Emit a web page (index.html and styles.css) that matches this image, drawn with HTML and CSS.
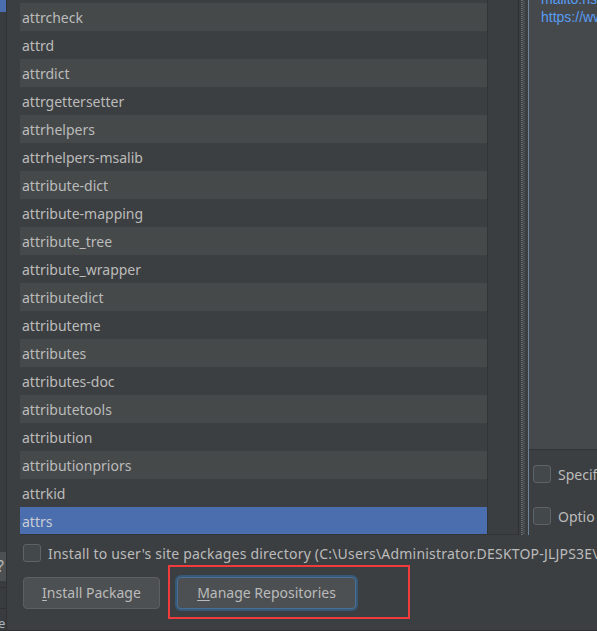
FILE: index.html
```html
<!DOCTYPE html>
<html>
<head>
<meta charset="utf-8">
<link rel="stylesheet" href="styles.css">
</head>
<body>
<div class="app">
  <div class="backdrop">
    <div class="bd-sel"></div>
    <div class="bd-fill"></div>
    <div class="bd-help">?</div>
    <div class="bd-gap1"></div>
    <div class="bd-gap2"></div>
    <div class="bd-text">e</div>
  </div>
  <div class="dialog">
    <div class="main">
      <div class="list">
        <div class="row dark partial"></div>
        <div class="row light">attrcheck</div>
        <div class="row dark">attrd</div>
        <div class="row light">attrdict</div>
        <div class="row dark">attrgettersetter</div>
        <div class="row light">attrhelpers</div>
        <div class="row dark">attrhelpers-msalib</div>
        <div class="row light">attribute-dict</div>
        <div class="row dark">attribute-mapping</div>
        <div class="row light">attribute_tree</div>
        <div class="row dark">attribute_wrapper</div>
        <div class="row light">attributedict</div>
        <div class="row dark">attributeme</div>
        <div class="row light">attributes</div>
        <div class="row dark">attributes-doc</div>
        <div class="row light">attributetools</div>
        <div class="row dark">attribution</div>
        <div class="row light">attributionpriors</div>
        <div class="row dark">attrkid</div>
        <div class="row selected">attrs</div>
      </div>
      <div class="gutter"></div>
      <div class="splitter"><span class="dots"></span></div>
      <div class="side">
        <div class="desc">
          <div class="desc-text">
            <div class="link">mailto:ns</div>
            <div class="link">https://ww</div>
          </div>
        </div>
        <div class="opts">
          <div class="opt"><span class="check"></span><span class="label">Specif</span></div>
          <div class="opt"><span class="check"></span><span class="label">Optio</span></div>
        </div>
      </div>
    </div>
    <div class="footer">
      <div class="opt user-opt"><span class="check"></span><span class="label wide">Install to user's site packages directory (C:\Users\Administrator.DESKTOP-JLJPS3E\</span></div>
      <div class="buttons">
        <div class="btn install"><u>I</u>nstall Package</div>
        <div class="btn manage focused"><u>M</u>anage Repositories</div>
      </div>
      <div class="highlight"></div>
    </div>
  </div>
</div>
</body>
</html>
```

FILE: styles.css
```css
html, body {
  margin: 0;
  padding: 0;
  background: #3c3f41;
  overflow: hidden;
}

body {
  width: 597px;
  height: 631px;
  font-family: "Noto Sans", "Open Sans", sans-serif;
  font-size: 14px;
  color: #bbbbbb;
}

.app {
  display: flex;
  height: 630px;
  border-bottom: 1px solid #2f3133;
}

.backdrop {
  flex: none;
  width: 6px;
  display: flex;
  flex-direction: column;
  background: #393c3e;
  overflow: hidden;
}

.bd-sel {
  height: 12px;
  background: #4b6eaf;
}

.bd-fill {
  flex: 1;
}

.bd-help {
  height: 29px;
  background: #4c5052;
  color: #bbbbbb;
  font-size: 16px;
  line-height: 29px;
  text-indent: -3px;
  margin-bottom: 6px;
}

.bd-gap1 {
  height: 20px;
  border-top: 1px solid #2f3133;
}

.bd-gap2 {
  height: 8px;
  border-top: 1px solid #2f3133;
}

.bd-text {
  height: 13px;
  line-height: 12px;
  font-size: 13px;
  color: #a9b7c6;
  text-indent: -2px;
}

.dialog {
  flex: 1;
  min-width: 0;
  display: flex;
  flex-direction: column;
  border-left: 1px solid #2f3133;
  position: relative;
  overflow: hidden;
}

.main {
  display: flex;
  height: 535px;
  padding-left: 13px;
}

.list {
  flex: none;
  width: 467px;
  height: 534px;
  overflow: hidden;
  border-right: 1px solid #323435;
  border-bottom: 1px solid #323435;
}

.row {
  height: 28px;
  line-height: 28px;
  padding-left: 2px;
  padding-top: 1px;
  box-sizing: border-box;
  white-space: nowrap;
}

.row.partial {
  height: 3px;
  padding: 0;
}

.row.light {
  background: #45494a;
}

.row.dark {
  background: #3c3f41;
}

.row.selected {
  background: #4b6eaf;
  color: #c8cdd4;
}

.gutter {
  flex: none;
  width: 30px;
  height: 534px;
  background: #3b3e40;
  border-right: 1px solid #2d2f30;
  border-bottom: 1px solid #323435;
}

.splitter {
  flex: none;
  width: 7px;
  height: 535px;
  border-right: 1px solid #71849a;
  display: flex;
  padding-left: 2px;
}

.dots {
  width: 4px;
  height: 535px;
  background-image:
    repeating-linear-gradient(to bottom, #67696b 0 1px, transparent 1px 2px),
    repeating-linear-gradient(to bottom, transparent 0 1px, #55585a 1px 2px);
  background-size: 2px 100%, 2px 100%;
  background-position: 0 0, 2px 0;
  background-repeat: repeat-y;
}

.side {
  flex: none;
  width: 68px;
  display: flex;
  flex-direction: column;
  overflow: hidden;
}

.desc {
  height: 449px;
  background: #46494b;
  border-bottom: 1px solid #323435;
  overflow: hidden;
  padding-left: 12px;
}

.desc-text {
  margin-top: -10px;
  font-family: "Liberation Sans", Arial, sans-serif;
  font-size: 14px;
  line-height: 18px;
  white-space: nowrap;
}

.link {
  color: #589df6;
}

.opts {
  display: flex;
  flex-direction: column;
  gap: 24px;
  padding: 15px 0 0 4px;
}

.opt {
  display: flex;
  align-items: center;
  gap: 7px;
  height: 18px;
  white-space: nowrap;
}

.check {
  flex: none;
  width: 16px;
  height: 16px;
  border: 1px solid #5f6365;
  border-radius: 3px;
  background: #43494a;
}

.footer {
  flex: 1;
  padding-left: 16px;
  position: relative;
}

.user-opt {
  margin-top: 9px;
}

.label.wide {
  letter-spacing: 0.2px;
}

.buttons {
  display: flex;
  gap: 17px;
  margin-top: 15px;
}

.btn {
  height: 30px;
  line-height: 30px;
  border: 1px solid #5e6060;
  border-radius: 4px;
  background: #4c5052;
  text-align: center;
  white-space: nowrap;
}

.btn.install {
  width: 135px;
}

.btn.manage {
  width: 177px;
}

.btn.focused {
  border-color: #4a6f96;
  box-shadow: 0 0 0 2px #385877;
}

.btn u {
  text-decoration-thickness: 1px;
  text-underline-offset: 2px;
}

.highlight {
  position: absolute;
  left: 161px;
  top: 30px;
  width: 238px;
  height: 50px;
  border: 2px solid #ef3b3b;
}
```
